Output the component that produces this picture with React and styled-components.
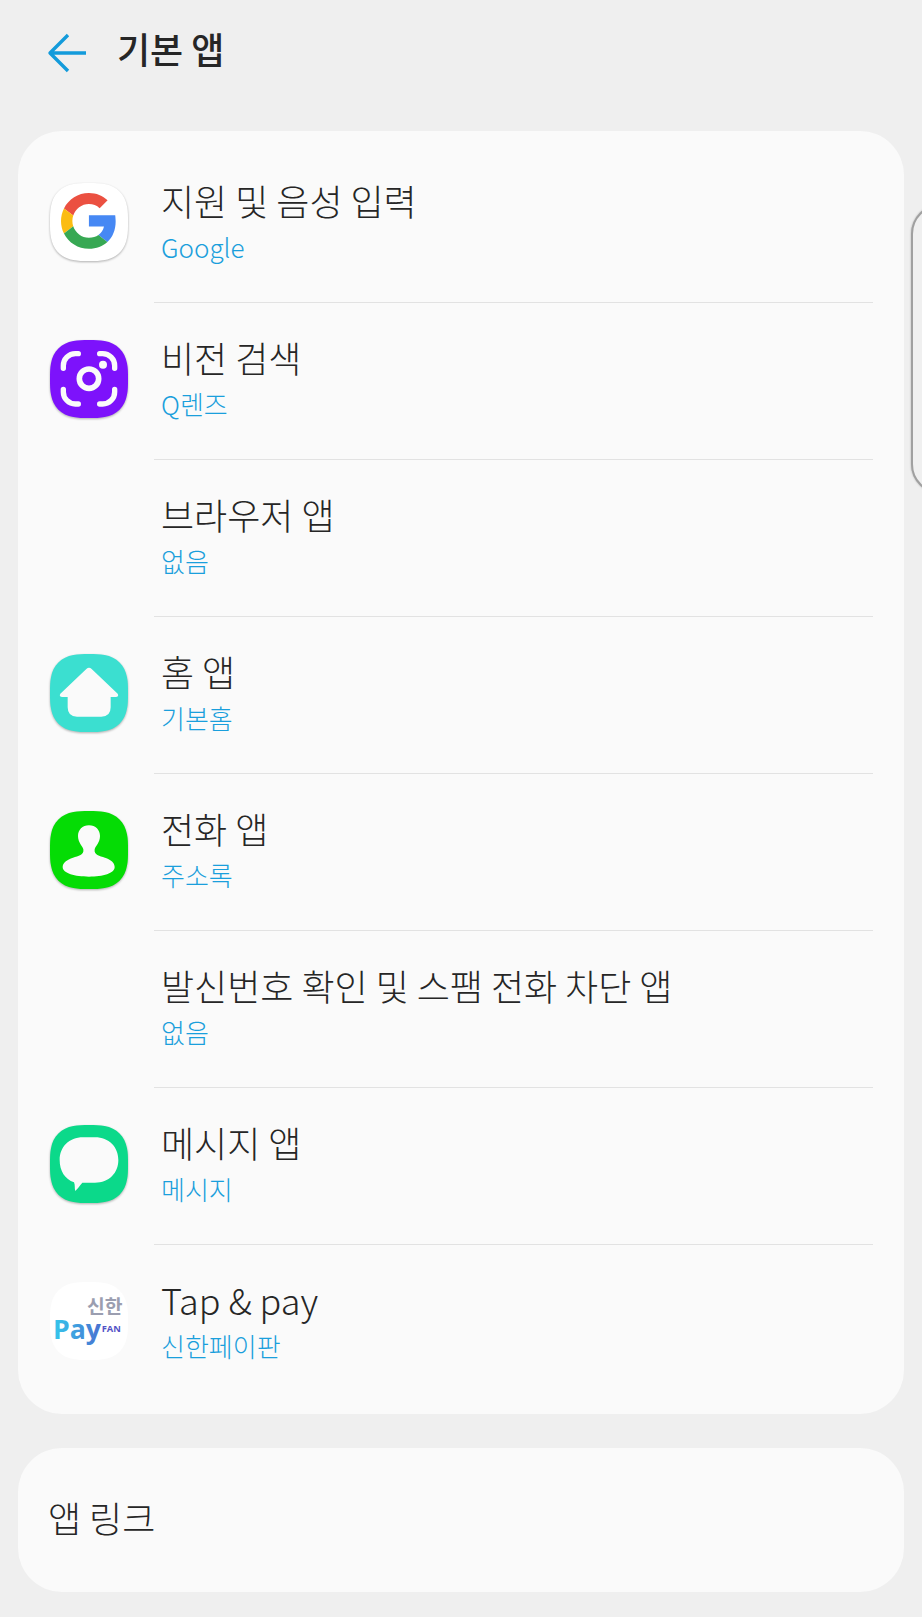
import React from "react";
import styled, { createGlobalStyle } from "styled-components";

const squircle =
  "M117 0C98 0 84 0 70 3C34 9 9 34 3 70C0 84 0 98 0 117S0 150 3 164C9 200 34 225 70 231C84 234 98 234 117 234S150 234 164 231C200 225 225 200 231 164C234 150 234 136 234 117S234 84 231 70C225 34 200 9 164 3C150 0 136 0 117 0Z";

const GoogleIcon = () => (
  <AppIcon viewBox="0 0 234 234" $shadow aria-hidden="true">
    <path d={squircle} fill="#fff" />
    <g transform="translate(33 30) scale(3.49)">
      <path
        fill="#eb5041"
        d="M24 9.5c3.54 0 6.71 1.22 9.21 3.6l6.85-6.85C35.9 2.38 30.47 0 24 0 14.62 0 6.51 5.38 2.56 13.22l7.98 6.19C12.43 13.72 17.74 9.5 24 9.5z"
      />
      <path
        fill="#4688f4"
        d="M46.98 24.55c0-1.57-.15-3.09-.38-5.35H24v9.62h12.94c-.58 2.96-2.26 5.48-4.78 7.38l7.73 6c4.51-4.18 7.09-10.36 7.09-17.65z"
      />
      <path
        fill="#fbbc12"
        d="M10.53 28.59c-.48-1.45-.76-2.99-.76-4.59s.27-3.14.76-4.59l-7.98-6.19C.92 16.46 0 20.12 0 24c0 3.88.92 7.54 2.56 10.78l7.97-6.19z"
      />
      <path
        fill="#37a853"
        d="M24 48c6.48 0 11.93-2.13 15.89-5.81l-7.73-6c-2.15 1.45-4.92 2.3-8.16 2.3-6.26 0-11.57-4.22-13.47-9.91l-7.98 6.19C6.51 42.62 14.62 48 24 48z"
      />
    </g>
  </AppIcon>
);

const LensIcon = () => (
  <AppIcon viewBox="0 0 234 234" $shadow aria-hidden="true">
    <path d={squircle} fill="#7d12fb" />
    <g fill="none" stroke="#fafafa" strokeWidth="16" strokeLinecap="round">
      <path d="M85 41H76A36 36 0 0 0 40 77V85" />
      <path d="M149 41H158A36 36 0 0 1 194 77V85" />
      <path d="M85 192H76A36 36 0 0 1 40 156V148" />
      <path d="M149 192H158A36 36 0 0 0 194 156V148" />
      <circle cx="117" cy="116" r="29" strokeWidth="17" />
    </g>
    <circle cx="159" cy="74" r="12" fill="#fafafa" />
  </AppIcon>
);

const HomeIcon = () => (
  <AppIcon viewBox="0 0 234 234" $shadow aria-hidden="true">
    <path d={squircle} fill="#3bdfd0" />
    <path
      fill="#fafafa"
      d="M109 45Q117 38 125 45L203 119Q208 128 197 129H182V160Q182 188 154 188H81Q53 188 53 160V129H37Q26 128 31 119Z"
    />
  </AppIcon>
);

const ContactsIcon = () => (
  <AppIcon viewBox="0 0 234 234" $shadow aria-hidden="true">
    <path d={squircle} fill="#05dc05" />
    <path
      fill="#fafafa"
      transform="translate(-31 -35)"
      d="M148 78C168 78 181 92 181 110C181 130 167 140 165 150C162 168 180 170 196 175C214 181 225 190 225 203C225 222 190 232 148 232C106 232 69 222 69 203C69 190 82 181 100 175C116 170 134 168 131 150C129 140 115 130 115 110C115 92 128 78 148 78Z"
    />
  </AppIcon>
);

const MessageIcon = () => (
  <AppIcon viewBox="0 0 234 234" $shadow aria-hidden="true">
    <path d={squircle} fill="#0bd98a" />
    <path
      fill="#fafafa"
      transform="translate(-31 -32)"
      d="M130 69H166C208 69 236 98 236 137C236 176 208 205 166 205H128C119 216 112 225 107 230C104 223 107 212 103 204C76 195 60 170 60 137C60 98 88 69 130 69Z"
    />
  </AppIcon>
);

const PayIcon = () => (
  <AppIcon viewBox="0 0 234 234" aria-hidden="true">
    <defs>
      <linearGradient id="pay" x1="0" y1="0" x2="1" y2="0">
        <stop offset="0" stopColor="#35c8ec" />
        <stop offset="1" stopColor="#4a6fd0" />
      </linearGradient>
    </defs>
    <path d={squircle} fill="#fff" />
    <LogoText x="111" y="96" fontSize="58" fill="#9b9eb0">
      신한
    </LogoText>
    <LogoText x="9" y="170" fontSize="80" fill="url(#pay)" $latin>
      Pay
    </LogoText>
    <LogoText x="155" y="149" fontSize="28" fill="#5353c6" $latin>
      FAN
    </LogoText>
  </AppIcon>
);

const apps = [
  { title: "지원 및 음성 입력", value: "Google", Icon: GoogleIcon },
  { title: "비전 검색", value: "Q렌즈", Icon: LensIcon },
  { title: "브라우저 앱", value: "없음" },
  { title: "홈 앱", value: "기본홈", Icon: HomeIcon },
  { title: "전화 앱", value: "주소록", Icon: ContactsIcon },
  { title: "발신번호 확인 및 스팸 전화 차단 앱", value: "없음" },
  { title: "메시지 앱", value: "메시지", Icon: MessageIcon },
  { title: "Tap & pay", value: "신한페이판", Icon: PayIcon },
];

const App = () => (
  <Page>
    <GlobalStyle />
    <Header>
      <BackButton aria-label="뒤로">
        <svg width="40" height="40" viewBox="0 0 40 40" aria-hidden="true">
          <path
            d="M21 2L3 20L21 38M3 20H39"
            fill="none"
            stroke="#139bdb"
            strokeWidth="3.4"
            strokeLinejoin="round"
          />
        </svg>
      </BackButton>
      <Heading>기본 앱</Heading>
    </Header>
    <main>
      <AppList>
        {apps.map(({ title, value, Icon }) => (
          <li key={title}>
            <Row>
              <IconSlot>{Icon && <Icon />}</IconSlot>
              <Labels>
                <Title>{title}</Title>
                <Value>{value}</Value>
              </Labels>
            </Row>
          </li>
        ))}
      </AppList>
      <LinkCard>
        <Title>앱 링크</Title>
      </LinkCard>
    </main>
    <EdgeHandle />
  </Page>
);

const GlobalStyle = createGlobalStyle`
  * {
    box-sizing: border-box;
  }
  body {
    margin: 0;
    background-color: #efefef;
  }
  button {
    border: 0;
    padding: 0;
    background: none;
    font: inherit;
    color: inherit;
    text-align: left;
    cursor: pointer;
  }
`;

const Page = styled.div`
  position: relative;
  min-height: 100vh;
  padding-bottom: 24px;
  overflow: hidden;
  color: #262626;
  font-family: "Noto Sans CJK KR", sans-serif;
  font-weight: 300;
`;

const Header = styled.header`
  display: flex;
  align-items: flex-end;
  gap: 30px;
  padding: 23px 47px 58px;
`;

const BackButton = styled.button`
  display: flex;
`;

const Heading = styled.h1`
  margin: 0;
  font-size: 36px;
  line-height: 50px;
  font-weight: 500;
`;

const AppList = styled.ul`
  margin: 0 18px 34px;
  padding: 15px 0 12px;
  border-radius: 44px;
  background-color: #fafafa;
  list-style: none;
`;

const Row = styled.button`
  display: flex;
  align-items: stretch;
  width: 100%;
  height: 157px;
  padding: 0 31px 0 32px;
`;

const IconSlot = styled.span`
  display: flex;
  align-items: center;
  width: 104px;
  padding-bottom: 6px;
`;

const AppIcon = styled.svg`
  width: 78px;
  height: 78px;
  overflow: visible;
  filter: ${({ $shadow }) =>
    $shadow ? "drop-shadow(0 1px 1px rgba(0, 0, 0, 0.3))" : "none"};
`;

const LogoText = styled.text`
  font-family: ${({ $latin }) =>
    $latin ? '"Open Sans", sans-serif' : '"Noto Sans CJK KR", sans-serif'};
  font-weight: 700;
`;

const Labels = styled.span`
  display: flex;
  flex: 1;
  flex-direction: column;
  justify-content: center;
  padding: 0 0 4px 7px;
  border-bottom: 1px solid #e2e2e2;

  li:last-child & {
    border-color: transparent;
  }
`;

const Title = styled.span`
  font-size: 36px;
  line-height: 50px;
`;

const Value = styled.span`
  color: #1a9fdc;
  font-size: 26px;
  line-height: 44px;
`;

const LinkCard = styled.button`
  display: flex;
  align-items: center;
  width: calc(100% - 36px);
  height: 144px;
  margin: 0 18px;
  padding: 0 30px 6px;
  border-radius: 44px;
  background-color: #fafafa;
`;

const EdgeHandle = styled.div`
  position: absolute;
  top: 204px;
  right: -49px;
  width: 60px;
  height: 290px;
  border: 2px solid #a0a0a0;
  border-radius: 32px;
  background-color: #f0f0f0;
  box-shadow: 0 0 2px rgba(0, 0, 0, 0.3);
`;

export default App;
